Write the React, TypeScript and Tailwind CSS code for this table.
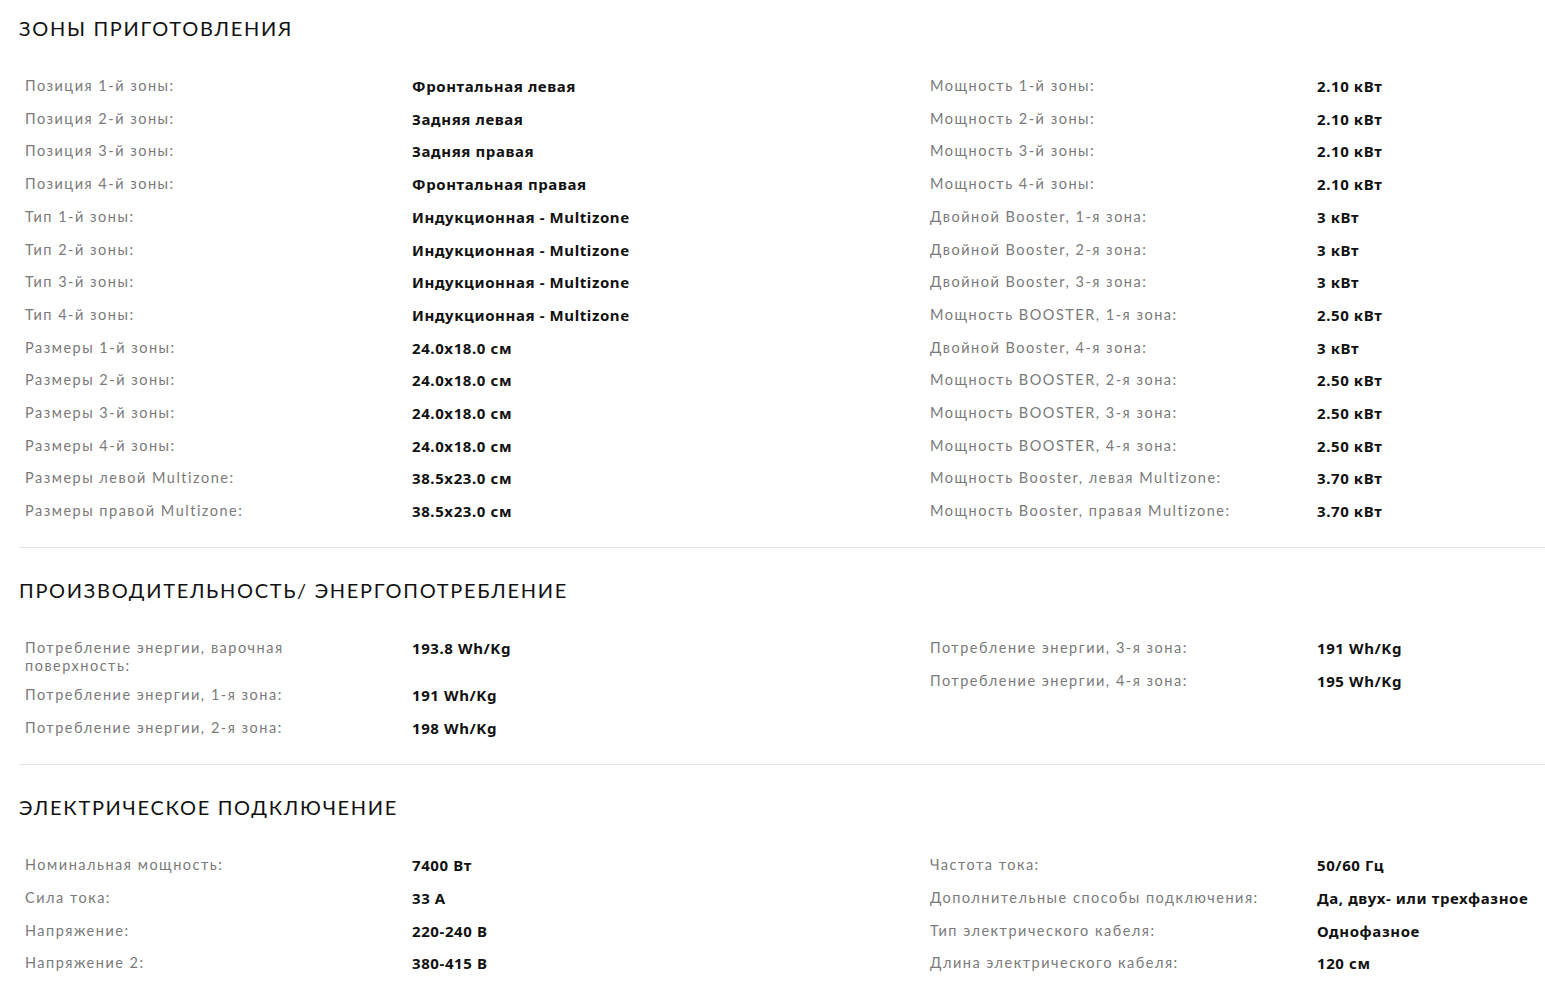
type Spec = { label: string; value: string };

type Section = {
  title: string;
  left: Spec[];
  right: Spec[];
};

const sections: Section[] = [
  {
    title: "ЗОНЫ ПРИГОТОВЛЕНИЯ",
    left: [
      { label: "Позиция 1-й зоны:", value: "Фронтальная левая" },
      { label: "Позиция 2-й зоны:", value: "Задняя левая" },
      { label: "Позиция 3-й зоны:", value: "Задняя правая" },
      { label: "Позиция 4-й зоны:", value: "Фронтальная правая" },
      { label: "Тип 1-й зоны:", value: "Индукционная - Multizone" },
      { label: "Тип 2-й зоны:", value: "Индукционная - Multizone" },
      { label: "Тип 3-й зоны:", value: "Индукционная - Multizone" },
      { label: "Тип 4-й зоны:", value: "Индукционная - Multizone" },
      { label: "Размеры 1-й зоны:", value: "24.0x18.0 см" },
      { label: "Размеры 2-й зоны:", value: "24.0x18.0 см" },
      { label: "Размеры 3-й зоны:", value: "24.0x18.0 см" },
      { label: "Размеры 4-й зоны:", value: "24.0x18.0 см" },
      { label: "Размеры левой Multizone:", value: "38.5x23.0 см" },
      { label: "Размеры правой Multizone:", value: "38.5x23.0 см" },
    ],
    right: [
      { label: "Мощность 1-й зоны:", value: "2.10 кВт" },
      { label: "Мощность 2-й зоны:", value: "2.10 кВт" },
      { label: "Мощность 3-й зоны:", value: "2.10 кВт" },
      { label: "Мощность 4-й зоны:", value: "2.10 кВт" },
      { label: "Двойной Booster, 1-я зона:", value: "3 кВт" },
      { label: "Двойной Booster, 2-я зона:", value: "3 кВт" },
      { label: "Двойной Booster, 3-я зона:", value: "3 кВт" },
      { label: "Мощность BOOSTER, 1-я зона:", value: "2.50 кВт" },
      { label: "Двойной Booster, 4-я зона:", value: "3 кВт" },
      { label: "Мощность BOOSTER, 2-я зона:", value: "2.50 кВт" },
      { label: "Мощность BOOSTER, 3-я зона:", value: "2.50 кВт" },
      { label: "Мощность BOOSTER, 4-я зона:", value: "2.50 кВт" },
      { label: "Мощность Booster, левая Multizone:", value: "3.70 кВт" },
      { label: "Мощность Booster, правая Multizone:", value: "3.70 кВт" },
    ],
  },
  {
    title: "ПРОИЗВОДИТЕЛЬНОСТЬ/ ЭНЕРГОПОТРЕБЛЕНИЕ",
    left: [
      { label: "Потребление энергии, варочная поверхность:", value: "193.8 Wh/Kg" },
      { label: "Потребление энергии, 1-я зона:", value: "191 Wh/Kg" },
      { label: "Потребление энергии, 2-я зона:", value: "198 Wh/Kg" },
    ],
    right: [
      { label: "Потребление энергии, 3-я зона:", value: "191 Wh/Kg" },
      { label: "Потребление энергии, 4-я зона:", value: "195 Wh/Kg" },
    ],
  },
  {
    title: "ЭЛЕКТРИЧЕСКОЕ ПОДКЛЮЧЕНИЕ",
    left: [
      { label: "Номинальная мощность:", value: "7400 Вт" },
      { label: "Сила тока:", value: "33 A" },
      { label: "Напряжение:", value: "220-240 В" },
      { label: "Напряжение 2:", value: "380-415 В" },
    ],
    right: [
      { label: "Частота тока:", value: "50/60 Гц" },
      { label: "Дополнительные способы подключения:", value: "Да, двух- или трехфазное" },
      { label: "Тип электрического кабеля:", value: "Однофазное" },
      { label: "Длина электрического кабеля:", value: "120 см" },
    ],
  },
];

function SpecRow({ label, value }: Spec) {
  return (
    <div className="flex items-start py-1 pl-[6px]">
      <div className="w-[387px] shrink-0 pr-[30px] mt-[3px] text-[14.5px] leading-[18px] tracking-[1.5px] text-[#7a7a7a] font-['Lato',sans-serif]">
        {label}
      </div>
      <div className="text-[15px] leading-[24.7px] font-bold tracking-[0.6px] text-[#111] font-['Noto_Sans',sans-serif] whitespace-nowrap">
        {value}
      </div>
    </div>
  );
}

function SpecSection({ section, first }: { section: Section; first: boolean }) {
  return (
    <section
      className={`border-b border-[#e6e6e6] pb-[19px] ${first ? "pt-[14px]" : "pt-[28.5px]"}`}
    >
      <h2 className="text-[20px] leading-[28px] tracking-[1.7px] text-[#111] font-['Lato',sans-serif] mb-[28px]">
        {section.title}
      </h2>
      <div className="flex">
        <div className="w-[905px] shrink-0">
          {section.left.map((s) => (
            <SpecRow key={s.label} {...s} />
          ))}
        </div>
        <div className="flex-1">
          {section.right.map((s) => (
            <SpecRow key={s.label} {...s} />
          ))}
        </div>
      </div>
    </section>
  );
}

export default function App() {
  return (
    <div className="min-h-screen bg-white pl-[19px] overflow-hidden">
      {sections.map((s, i) => (
        <SpecSection key={s.title} section={s} first={i === 0} />
      ))}
    </div>
  );
}
